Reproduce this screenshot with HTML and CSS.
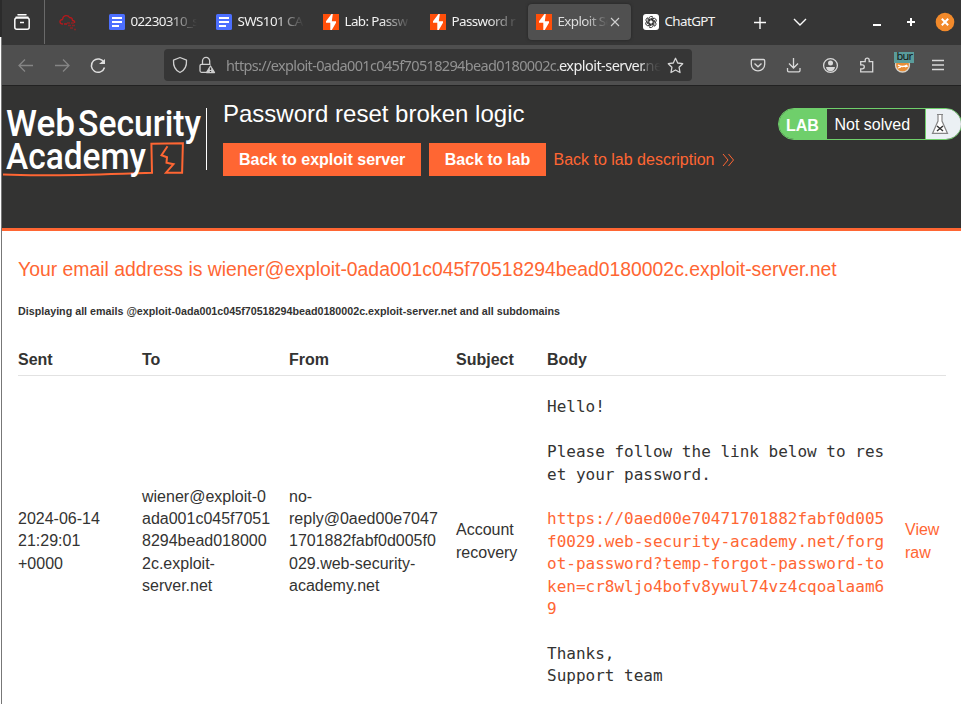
FILE: index.html
```html
<!DOCTYPE html>
<html lang="en">
<head>
<meta charset="utf-8">
<title>Exploit Server: Password reset broken logic</title>
<link rel="stylesheet" href="styles.css">
</head>
<body>
<svg width="0" height="0" class="defs">
  <symbol id="doc" viewBox="0 0 16 16"><rect width="16" height="16" rx="1.5" fill="#4c6fff"/><path d="M3 4h10M3 8h10M3 12h7" stroke="#fff" stroke-width="2"/></symbol>
  <symbol id="bolt" viewBox="0 0 16 16"><rect width="16" height="16" fill="#ff4f0a"/><path d="M8.500 0 3 7.200v1.600h4.300V16h1.500L13 8.800V7.200H8.800l1-7.200z" fill="#fff"/></symbol>
</svg>
<div class="screen">
  <div class="edge"><i class="edge-top"></i></div>
  <div class="window">
    <header class="tabs">
      <div class="view"><svg width="16" height="16" viewBox="0 0 16 16" fill="none" stroke="#fbfbfb" stroke-width="1.500"><path d="M4 .8h8M2 3.200h12" stroke-linecap="round"/><rect x=".8" y="4" width="14.400" height="11.200" rx="2"/><path d="M6 8.500h4"/></svg></div>
      <div class="tab pin"><svg width="18" height="17" viewBox="0 0 18 17" fill="none" stroke="#b3191c" stroke-width="1.300"><path d="M4 10C0 10 0 5.500 3.500 5.500 4 1 9 .5 10.500 3.500c2 0 3 1 3 3 2 0 2.500 1.500 2 2.500M5 10h3"/><path d="M8 9h8M9 11.500h7M11 14h3m1 1.500h2" stroke-dasharray="3 1" opacity=".65"/></svg></div>
      <div class="tab"><svg width="16" height="16"><use href="#doc"/></svg><span class="label fade">02230310_s</span></div>
      <div class="tab"><svg width="16" height="16"><use href="#doc"/></svg><span class="label fade">SWS101 CAP</span></div>
      <div class="tab"><svg width="16" height="16"><use href="#bolt"/></svg><span class="label fade">Lab: Passw</span></div>
      <div class="tab last"><svg width="16" height="16"><use href="#bolt"/></svg><span class="label fade">Password r</span></div>
      <div class="tab active"><svg width="16" height="16"><use href="#bolt"/></svg><span class="label fade">Exploit Se</span><svg class="close" width="10" height="10" viewBox="0 0 10 10"><path d="m1 1 8 8M9 1 1 9" stroke="#d0d0d0" stroke-width="1.100"/></svg></div>
      <div class="tab chat"><svg width="16" height="16" viewBox="0 0 16 16"><rect width="16" height="16" rx="3" fill="#fff"/><g fill="none" stroke="#222" stroke-width=".85"><path id="petal" d="M6 9.200V4.600A2.300 2.300 0 0 1 10.200 3.400M6 5.800 9.800 3.700"/><use href="#petal" transform="rotate(60 8 8)"/><use href="#petal" transform="rotate(120 8 8)"/><use href="#petal" transform="rotate(180 8 8)"/><use href="#petal" transform="rotate(240 8 8)"/><use href="#petal" transform="rotate(300 8 8)"/></g></svg><span class="label">ChatGPT</span></div>
      <svg class="controls" width="220" height="44" viewBox="741 0 220 44" fill="none"><path d="M754 22.500h12M760 17v12M794 19l6 6 6-6" stroke="#fbfbfb" stroke-width="1.400"/><path d="M873 25h8M907 22h8M911 18v8" stroke="#fff" stroke-width="2"/><circle cx="945" cy="22" r="9.300" fill="#f28a2b"/><path d="m941.800 18.800 6.400 6.400m0-6.400-6.400 6.400" stroke="#fff" stroke-width="2"/></svg>
    </header>
    <nav class="toolbar">
      <svg class="nav-icons" width="162" height="40" viewBox="2 45 162 40" fill="none" stroke-width="1.300"><path d="M33 65.500H19.500m5.500-6-6 6 6 6M55 65.500h13.500m-5.500-6 6 6-6 6" stroke="#858585"/><path d="M104 62.500a6.700 6.700 0 1 0 .5 5" stroke="#dedede" stroke-width="1.500"/><path d="M105 59v5h-6z" fill="#dedede"/></svg>
      <div class="address">
        <svg width="54" height="32" viewBox="164 49 54 32" fill="none" stroke="#cfcfcf" stroke-width="1.300"><path d="m180 57.500 6.500 2.700c.3 5-1.500 10-6.500 12.300-5-2.300-6.800-7.300-6.500-12.300z" stroke-linejoin="round"/><path d="M207 72.300h-5.500c-1 0-1.500-.5-1.500-1.500v-5c0-1 .5-1.500 1.500-1.500h9M202.500 64v-3a3.600 3.600 0 0 1 7.200 0v3.500"/><path d="m210.500 66 4 6.500h-8z" fill="#cfcfcf" stroke-linejoin="round"/><path d="M210.500 67.500v2.500m0 1v1" stroke="#383838"/></svg>
        <div class="url"><span class="url-dim">https://exploit-0ada001c045f70518294bead0180002c.</span><span class="url-host">exploit-server.<span class="url-tld">ne</span></span></div>
        <svg class="star" width="17" height="17" viewBox="0 0 17 17" fill="none" stroke="#d5d5d5" stroke-width="1.300" stroke-linejoin="round"><path d="m8.500 1.300 2.200 4.700 5 .7-3.600 3.600.9 5.200-4.500-2.500L4 15.500l.9-5.200L1.300 6.700l5-.7z"/></svg>
      </div>
      <svg class="tools" width="269" height="40" viewBox="692 45 269 40" fill="none" stroke="#d8d8d8" stroke-width="1.300"><path d="M752.500 59.500h11c.8 0 1.200.4 1.200 1.200v3.500a6.700 6.700 0 0 1-13.400 0v-3.500c0-.8.4-1.200 1.200-1.200zM754.500 63.500l3.500 3.300 3.500-3.300"/><path d="M793.500 58v10m-4.500-4.500 4.500 4.500 4.500-4.500M787.500 68v2.500c0 .8.500 1.300 1.300 1.300h9.900c.8 0 1.300-.5 1.300-1.300V68"/><circle cx="830.500" cy="65.500" r="6.900"/><circle cx="830.500" cy="63" r="2.500" fill="#d8d8d8" stroke="none"/><path d="M826 67h9c-.5 3-2 4.200-4.500 4.200S826.500 70 826 67z" fill="#d8d8d8" stroke="none"/><path d="M860.700 71.800v-3h1.600a2 2 0 0 0 0-4h-1.600v-3.100h4.500v-1.500a2 2 0 0 1 4 0v1.500h3.500v10.100z"/><circle cx="902.500" cy="65" r="7" fill="#e78d36" stroke="#d9d4cc"/><path d="M898 65q4.500 3 9 0M898 68l3-1m4 0 3-1" stroke="#fff"/><rect x="894" y="52" width="20" height="11" fill="#5a9c9b" stroke="none"/><text x="896.500" y="60.300" font-family="Noto Sans" font-size="11" textLength="16.500" fill="#111" stroke="none">bur</text><path d="M932 60.500h12M932 65h12M932 69.500h12"/></svg>
    </nav>
    <main class="page">
      <section class="banner">
        <svg class="logo" width="205" height="80" viewBox="2 102 205 80"><g font-family="Roboto" font-weight="500" fill="#fff"><text x="6" y="136" font-size="37" textLength="69" lengthAdjust="spacingAndGlyphs">Web</text><text x="78" y="136" font-size="37" textLength="123" lengthAdjust="spacingAndGlyphs">Security</text></g><path d="M3 174.500c30 1.500 80 .5 120-.8l29-1-.6-29 31.500-.5-.8 29.500H166l7.500-8.500-7-1.500.5-5.500-5.500-2 6-9" fill="none" stroke="#ff6633" stroke-width="2"/><text x="6" y="169" font-family="Roboto" font-weight="500" fill="#fff" font-size="37" textLength="140" lengthAdjust="spacingAndGlyphs">Academy</text><path d="M206.500 108v62" stroke="#fff"/></svg>
        <div class="lab-info"><h1>Password reset broken logic</h1>
          <div class="actions"><a class="button">Back to exploit server</a><a class="button short">Back to lab</a><a class="back">Back to lab description<svg width="13" height="14" viewBox="0 0 13 14" fill="none" stroke="#ff6633"><path d="m1 1 5 6-5 6M6.500 1l5 6-5 6"/></svg></a></div>
        </div>
        <div class="status"><b>LAB</b><span>Not solved</span><i><svg width="18" height="22" viewBox="0 0 18 22" fill="#fff" stroke="#858585" stroke-width="1.200"><path d="M6 1.500h6M7 2v6L1.500 20.400h15L11 8V2"/><path d="m6 13 6 5m0-5-6 5" stroke="#333" stroke-width="1.500"/></svg></i></div>
      </section>
      <section class="mail">
        <h2>Your email address is wiener@exploit-0ada001c045f70518294bead0180002c.exploit-server.net</h2>
        <h6>Displaying all emails @exploit-0ada001c045f70518294bead0180002c.exploit-server.net and all subdomains</h6>
        <table>
          <colgroup><col class="c1"><col class="c2"><col class="c3"><col class="c4"><col class="c5"><col></colgroup>
          <thead><tr><th>Sent</th><th>To</th><th>From</th><th>Subject</th><th>Body</th><th></th></tr></thead>
          <tbody><tr>
            <td>2024-06-14<br>21:29:01<br>+0000</td>
            <td>wiener@exploit-0<br>ada001c045f7051<br>8294bead018000<br>2c.exploit-<br>server.net</td>
            <td>no-<br>reply@0aed00e7047<br>1701882fabf0d005f0<br>029.web-security-<br>academy.net</td>
            <td>Account<br>recovery</td>
            <td><pre>Hello!

Please follow the link below to res
et your password.

<a>https://0aed00e70471701882fabf0d005
f0029.web-security-academy.net/forg
ot-password?temp-forgot-password-to
ken=cr8wljo4bofv8ywul74vz4cqoalaam6
9</a>

Thanks,
Support team</pre></td>
            <td><a>View<br>raw</a></td>
          </tr></tbody>
        </table>
      </section>
    </main>
  </div>
</div>
</body>
</html>
```
FILE: styles.css
```css
* { box-sizing: border-box; }
body { margin: 0; overflow: hidden; background: #fff; font: 16px/22.4px "Liberation Sans", sans-serif; color: #333332; }
svg { display: block; flex: none; }
.defs { position: absolute; }
.screen { display: flex; width: 961px; height: 704px; overflow: hidden; }
.edge { width: 2px; background: #fff; border-right: 1px solid #777; }
.edge-top { display: block; width: 2px; height: 37px; background: #2b2b2b; }
.window { width: 959px; }
.tabs { display: flex; height: 45px; background: #363636; align-items: flex-start; }
.view { width: 43px; height: 44px; padding: 14px 0 0 12px; border-right: 1px solid #6a6a6a; }
.tab { display: flex; width: 107px; height: 36px; margin-top: 4px; padding: 0 8px; align-items: center; gap: 6px; color: #f2f2f2; font: 13.4px/18px "Noto Sans", sans-serif; }
.tab.pin { width: 56px; padding-left: 14px; }
.tab.last { width: 106px; }
.tab.active { width: 103px; margin-right: 4px; background: #505050; border-radius: 4px; box-shadow: 0 0 3px #222; color: #ddd; }
.label { display: block; width: 66px; margin: -2px 0 0 -.5px; overflow: hidden; white-space: nowrap; letter-spacing: -.6px; }
.fade { mask-image: linear-gradient(to right, #000 55%, transparent); }
.active .label { width: 50px; }
.close { margin-left: -4px; }
.tab.chat { width: 107px; }
.controls { margin-left: -1px; }
.toolbar { display: flex; height: 40px; background: #4f4f4f; }
.address { display: flex; width: 528px; height: 32px; margin-top: 4px; border-radius: 4px; background: #363636; align-items: center; }
.url { display: flex; width: 443px; padding-left: 8px; overflow: hidden; white-space: nowrap; font: 14.5px/20px "Noto Sans", sans-serif; mask-image: linear-gradient(to right, #000 95%, transparent); }
.url-dim { flex: none; width: 333px; color: #929292; letter-spacing: -.65px; }
.url-host { color: #eee; letter-spacing: -.55px; }
.url-tld { color: #929292; }
.star { margin-left: 6px; }
.banner { display: flex; height: 146px; background: #333332; border-top: 1px solid #222; border-bottom: 3px solid #ff6633; }
.logo { margin-top: 16px; }
.lab-info { flex: none; width: 555px; padding: 13px 0 0 16px; }
h1 { margin: 0; height: 44px; font: 24px/29px "Liberation Sans", sans-serif; color: #fff; }
.actions { display: flex; gap: 8px; line-height: 33px; }
.button { height: 33px; padding: 0 16px; background: #ff6633; color: #fff; font-weight: 700; white-space: nowrap; }
.button.short { width: 117px; padding-left: 15.500px; }
.back, .mail a { color: #ff6633; }
.back { display: flex; align-items: center; gap: 8px; margin-left: -.8px; white-space: nowrap; }
.status { display: flex; flex: none; width: 184px; height: 32px; margin: 22px 0 0 16px; border: 1px solid #6fcf6b; border-radius: 16px; overflow: hidden; color: #fff; line-height: 32px; }
.status b { width: 48px; padding: 1px 0 0 7px; background: #6fcf6b; }
.status span { width: 99px; padding-left: 7.5px; border-right: 1px solid #6fcf6b; }
.status i { flex: 1; padding: 4px 0 0 5px; background: #ebf0f4; }
.mail { padding: 0 15px 0 16px; }
h2 { margin: 0; padding-top: 25px; font: 19.370px/27px "Liberation Sans", sans-serif; color: #ff6633; white-space: nowrap; }
h6 { margin: 20px 0 0; font-size: 10.720px; line-height: 17px; }
table { width: 928px; margin-top: 24px; table-layout: fixed; border-collapse: collapse; }
th, td { padding: 0; text-align: left; white-space: nowrap; }
th { height: 31px; padding-bottom: 0; border-bottom: 1px solid #e2e2e2; }
thead th { vertical-align: top; padding-top: 5px; }
td { vertical-align: middle; }
.c1 { width: 124px; } .c2 { width: 147px; } .c3 { width: 167px; } .c4 { width: 91px; } .c5 { width: 358px; }
pre { margin: 20.800px 0 20.200px; font: 16px/22.4px "DejaVu Sans Mono", monospace; }
```
